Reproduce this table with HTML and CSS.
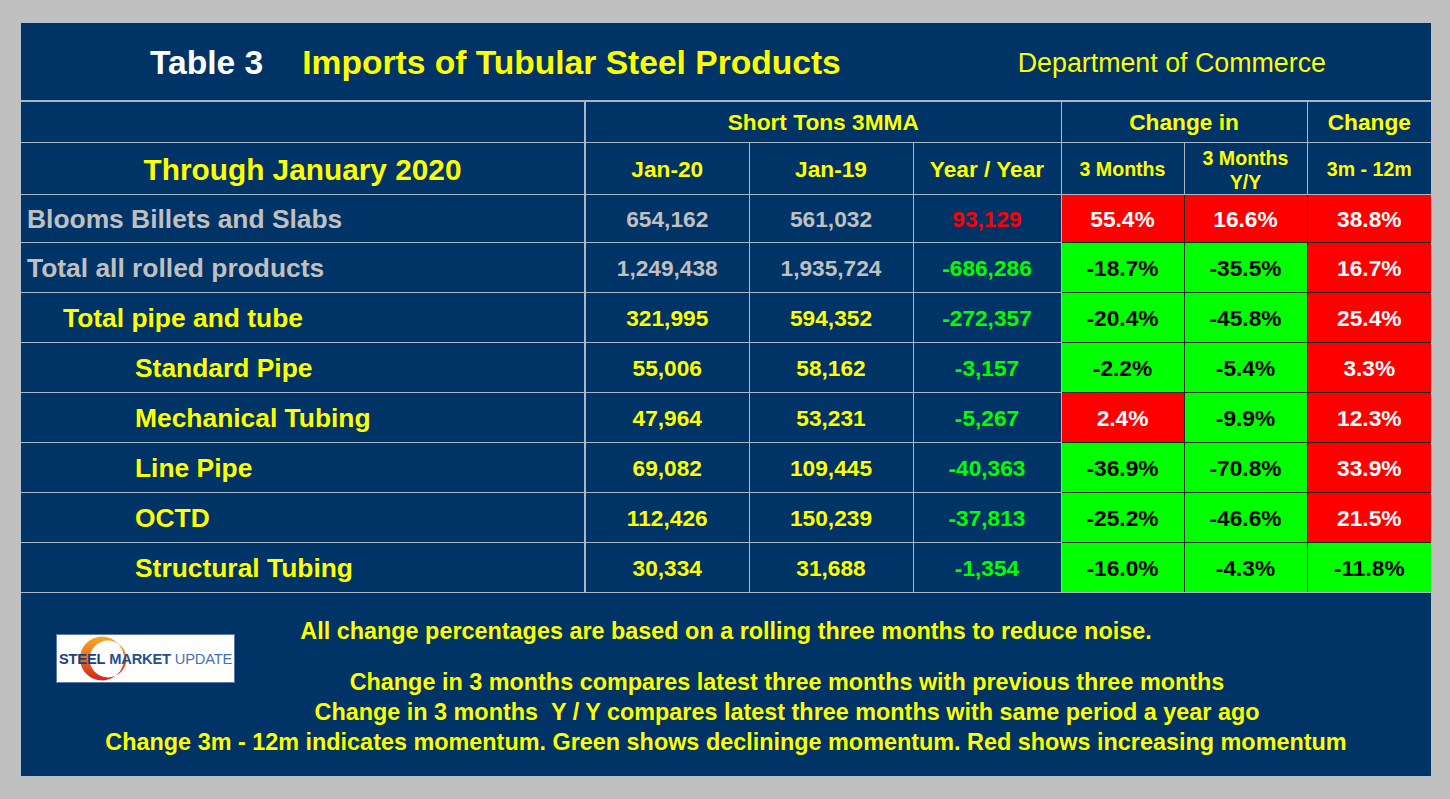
FILE: index.html
```html
<!DOCTYPE html>
<html>
<head>
<meta charset="utf-8">
<title>Imports of Tubular Steel Products</title>
<link rel="stylesheet" href="styles.css">
</head>
<body>
<div class="panel">
  <div class="title">
    <span class="t-num">Table 3</span>
    <span class="t-main">Imports of Tubular Steel Products</span>
    <span class="t-src">Department of Commerce</span>
  </div>
  <table class="grid">
    <colgroup>
      <col class="c1"><col class="c2"><col class="c3"><col class="c4"><col class="c5"><col class="c6"><col class="c7">
    </colgroup>
    <tr class="h1">
      <td class="lab"></td>
      <td colspan="3" class="hd">Short Tons 3MMA</td>
      <td colspan="2" class="hd">Change in</td>
      <td class="hd">Change</td>
    </tr>
    <tr class="h2">
      <td class="lab through">Through January 2020</td>
      <td class="hd">Jan-20</td>
      <td class="hd">Jan-19</td>
      <td class="hd">Year / Year</td>
      <td class="hd sm">3 Months</td>
      <td class="hd sm two">3 Months<br>Y/Y</td>
      <td class="hd sm">3m - 12m</td>
    </tr>
    <tr class="r first">
      <td class="lab gray i0">Blooms Billets and Slabs</td>
      <td class="num gray">654,162</td><td class="num gray">561,032</td><td class="num red">93,129</td>
      <td class="pct up">55.4%</td><td class="pct up">16.6%</td><td class="pct up">38.8%</td>
    </tr>
    <tr class="r">
      <td class="lab gray i0">Total all rolled products</td>
      <td class="num gray">1,249,438</td><td class="num gray">1,935,724</td><td class="num grn">-686,286</td>
      <td class="pct dn">-18.7%</td><td class="pct dn">-35.5%</td><td class="pct up">16.7%</td>
    </tr>
    <tr class="r">
      <td class="lab yel i1">Total pipe and tube</td>
      <td class="num yel">321,995</td><td class="num yel">594,352</td><td class="num grn">-272,357</td>
      <td class="pct dn">-20.4%</td><td class="pct dn">-45.8%</td><td class="pct up">25.4%</td>
    </tr>
    <tr class="r">
      <td class="lab yel i2">Standard Pipe</td>
      <td class="num yel">55,006</td><td class="num yel">58,162</td><td class="num grn">-3,157</td>
      <td class="pct dn">-2.2%</td><td class="pct dn">-5.4%</td><td class="pct up">3.3%</td>
    </tr>
    <tr class="r">
      <td class="lab yel i2">Mechanical Tubing</td>
      <td class="num yel">47,964</td><td class="num yel">53,231</td><td class="num grn">-5,267</td>
      <td class="pct up">2.4%</td><td class="pct dn">-9.9%</td><td class="pct up">12.3%</td>
    </tr>
    <tr class="r">
      <td class="lab yel i2">Line Pipe</td>
      <td class="num yel">69,082</td><td class="num yel">109,445</td><td class="num grn">-40,363</td>
      <td class="pct dn">-36.9%</td><td class="pct dn">-70.8%</td><td class="pct up">33.9%</td>
    </tr>
    <tr class="r">
      <td class="lab yel i2">OCTD</td>
      <td class="num yel">112,426</td><td class="num yel">150,239</td><td class="num grn">-37,813</td>
      <td class="pct dn">-25.2%</td><td class="pct dn">-46.6%</td><td class="pct up">21.5%</td>
    </tr>
    <tr class="r last">
      <td class="lab yel i2">Structural Tubing</td>
      <td class="num yel">30,334</td><td class="num yel">31,688</td><td class="num grn">-1,354</td>
      <td class="pct dn">-16.0%</td><td class="pct dn">-4.3%</td><td class="pct dn">-11.8%</td>
    </tr>
  </table>
  <div class="foot">
    <div class="logo">
      <svg class="logo-arc" width="179" height="49" viewBox="0 0 179 49" aria-hidden="true">
        <defs>
          <linearGradient id="arcg" x1="0" y1="0" x2="0" y2="1">
            <stop offset="0" stop-color="#f7a823"/>
            <stop offset="0.5" stop-color="#ec6a1f"/>
            <stop offset="1" stop-color="#d2231d"/>
          </linearGradient>
        </defs>
        <path fill="url(#arcg)" fill-rule="evenodd"
          d="M46 2.5 A22 22 0 1 0 46 46.5 A22 22 0 1 0 46 2.5 Z M52 6.5 A18.5 18.5 0 1 1 52 43.5 A18.5 18.5 0 1 1 52 6.5 Z"/>
      </svg>
      <span class="logo-txt"><b class="s1">STEEL</b> <b class="s2">MARKET</b> <span class="s3">UPDATE</span></span>
    </div>
    <div class="fl l1">All change percentages are based on a rolling three months to reduce noise.</div>
    <div class="fl l2 shift">Change in 3 months compares latest three months with previous three months</div>
    <div class="fl l3 shift">Change in 3 months &nbsp;Y / Y compares latest three months with same period a year ago</div>
    <div class="fl l4">Change 3m - 12m indicates momentum. Green shows declininge momentum. Red shows increasing momentum</div>
  </div>
</div>
</body>
</html>
```
FILE: styles.css
```css
html, body {
  margin: 0;
  padding: 0;
}
body {
  background: #c0c0c0;
  width: 1450px;
  height: 799px;
  overflow: hidden;
  font-family: "Liberation Sans", Arial, sans-serif;
}
.panel {
  box-sizing: border-box;
  width: 1412px;
  height: 755px;
  margin: 22px 0 0 20px;
  border: 1px solid #b4c0d0;
  background: #003366;
  display: flex;
  flex-direction: column;
}
.title {
  box-sizing: border-box;
  height: 79px;
  border-bottom: 2px solid #a9b7c9;
  display: flex;
  align-items: center;
  padding-top: 3px;
}
.t-num {
  margin-left: 129px;
  color: #ffffff;
  font-weight: bold;
  font-size: 33.6px;
}
.t-main {
  margin-left: 39px;
  color: #ffff00;
  font-weight: bold;
  font-size: 33.6px;
}
.t-src {
  margin-left: auto;
  margin-right: 105px;
  color: #ffff00;
  font-size: 26.8px;
}
.grid {
  width: 1410px;
  table-layout: fixed;
  border-collapse: collapse;
  border-style: hidden;
}
.c1 { width: 564px; }
.c2 { width: 164px; }
.c3 { width: 164px; }
.c4 { width: 148px; }
.c5 { width: 123px; }
.c6 { width: 123px; }
.c7 { width: 124px; }
.grid td {
  border: 1px solid #a9b7c9;
  padding: 0;
  text-align: center;
  font-weight: bold;
  font-size: 22.7px;
  white-space: nowrap;
}
.grid td.lab {
  border-right: 2px solid #a9b7c9;
}
.h1 td { height: 40px; }
.h2 td { height: 49px; padding-top: 2px; }
.r td { height: 47px; padding-top: 2px; }
.r.first td { height: 45px; }
.hd {
  color: #ffff00;
  font-size: 23px;
}
.grid td.sm {
  font-size: 19.6px;
}
.grid td.two {
  line-height: 24px;
}
.grid td.through {
  color: #ffff00;
  font-size: 29.8px;
}
.grid td.lab.i0, .grid td.lab.i1, .grid td.lab.i2 {
  text-align: left;
  font-size: 26.4px;
}
.i0 { padding-left: 6px !important; }
.i1 { padding-left: 42px !important; }
.i2 { padding-left: 114px !important; }
.gray { color: #c0c0c0; }
.yel { color: #ffff00; }
.red { color: #ff0000; }
.grn { color: #00ff00; }
.grid td.pct {
  border-color: #1e2a1e;
}
.grid td.pct.up {
  background: #ff0000;
  color: #ffffff;
}
.grid td.pct.dn {
  background: #00ff00;
  color: #000000;
}
.grid tr.last td.pct {
  border-bottom-color: #a9b7c9;
}
.foot {
  flex: 1;
  border-top: 1px solid #a9b7c9;
  display: grid;
  grid-template-columns: 1fr;
  grid-template-rows: 30px 30px 30px 30px;
  row-gap: 0;
  padding-top: 23px;
  color: #ffff00;
  font-weight: bold;
  font-size: 23.4px;
}
.fl {
  grid-column: 1;
  text-align: center;
  line-height: 30px;
  white-space: nowrap;
}
.l1 { grid-row: 1; }
.l2 { grid-row: 2; margin-top: 21px; }
.l3 { grid-row: 3; margin-top: 21px; }
.l4 { grid-row: 4; margin-top: 21px; }
.shift { padding-left: 122px; }
.logo {
  grid-column: 1;
  grid-row: 1 / 3;
  justify-self: start;
  align-self: start;
  margin: 18px 0 0 35px;
  width: 179px;
  height: 49px;
  box-sizing: border-box;
  background: #ffffff;
  border: 1px solid #5c7aa6;
  position: relative;
  display: flex;
  align-items: center;
  z-index: 1;
}
.logo-arc {
  position: absolute;
  left: -1px;
  top: -1px;
}
.logo-txt {
  position: relative;
  margin-left: 2px;
  font-size: 14.7px;
  letter-spacing: -0.2px;
  white-space: nowrap;
  font-weight: normal;
}
.s1 { color: #1d3f7c; font-weight: bold; }
.s2 { color: #24508f; font-weight: bold; }
.s3 { color: #4470b4; font-weight: normal; }
```
